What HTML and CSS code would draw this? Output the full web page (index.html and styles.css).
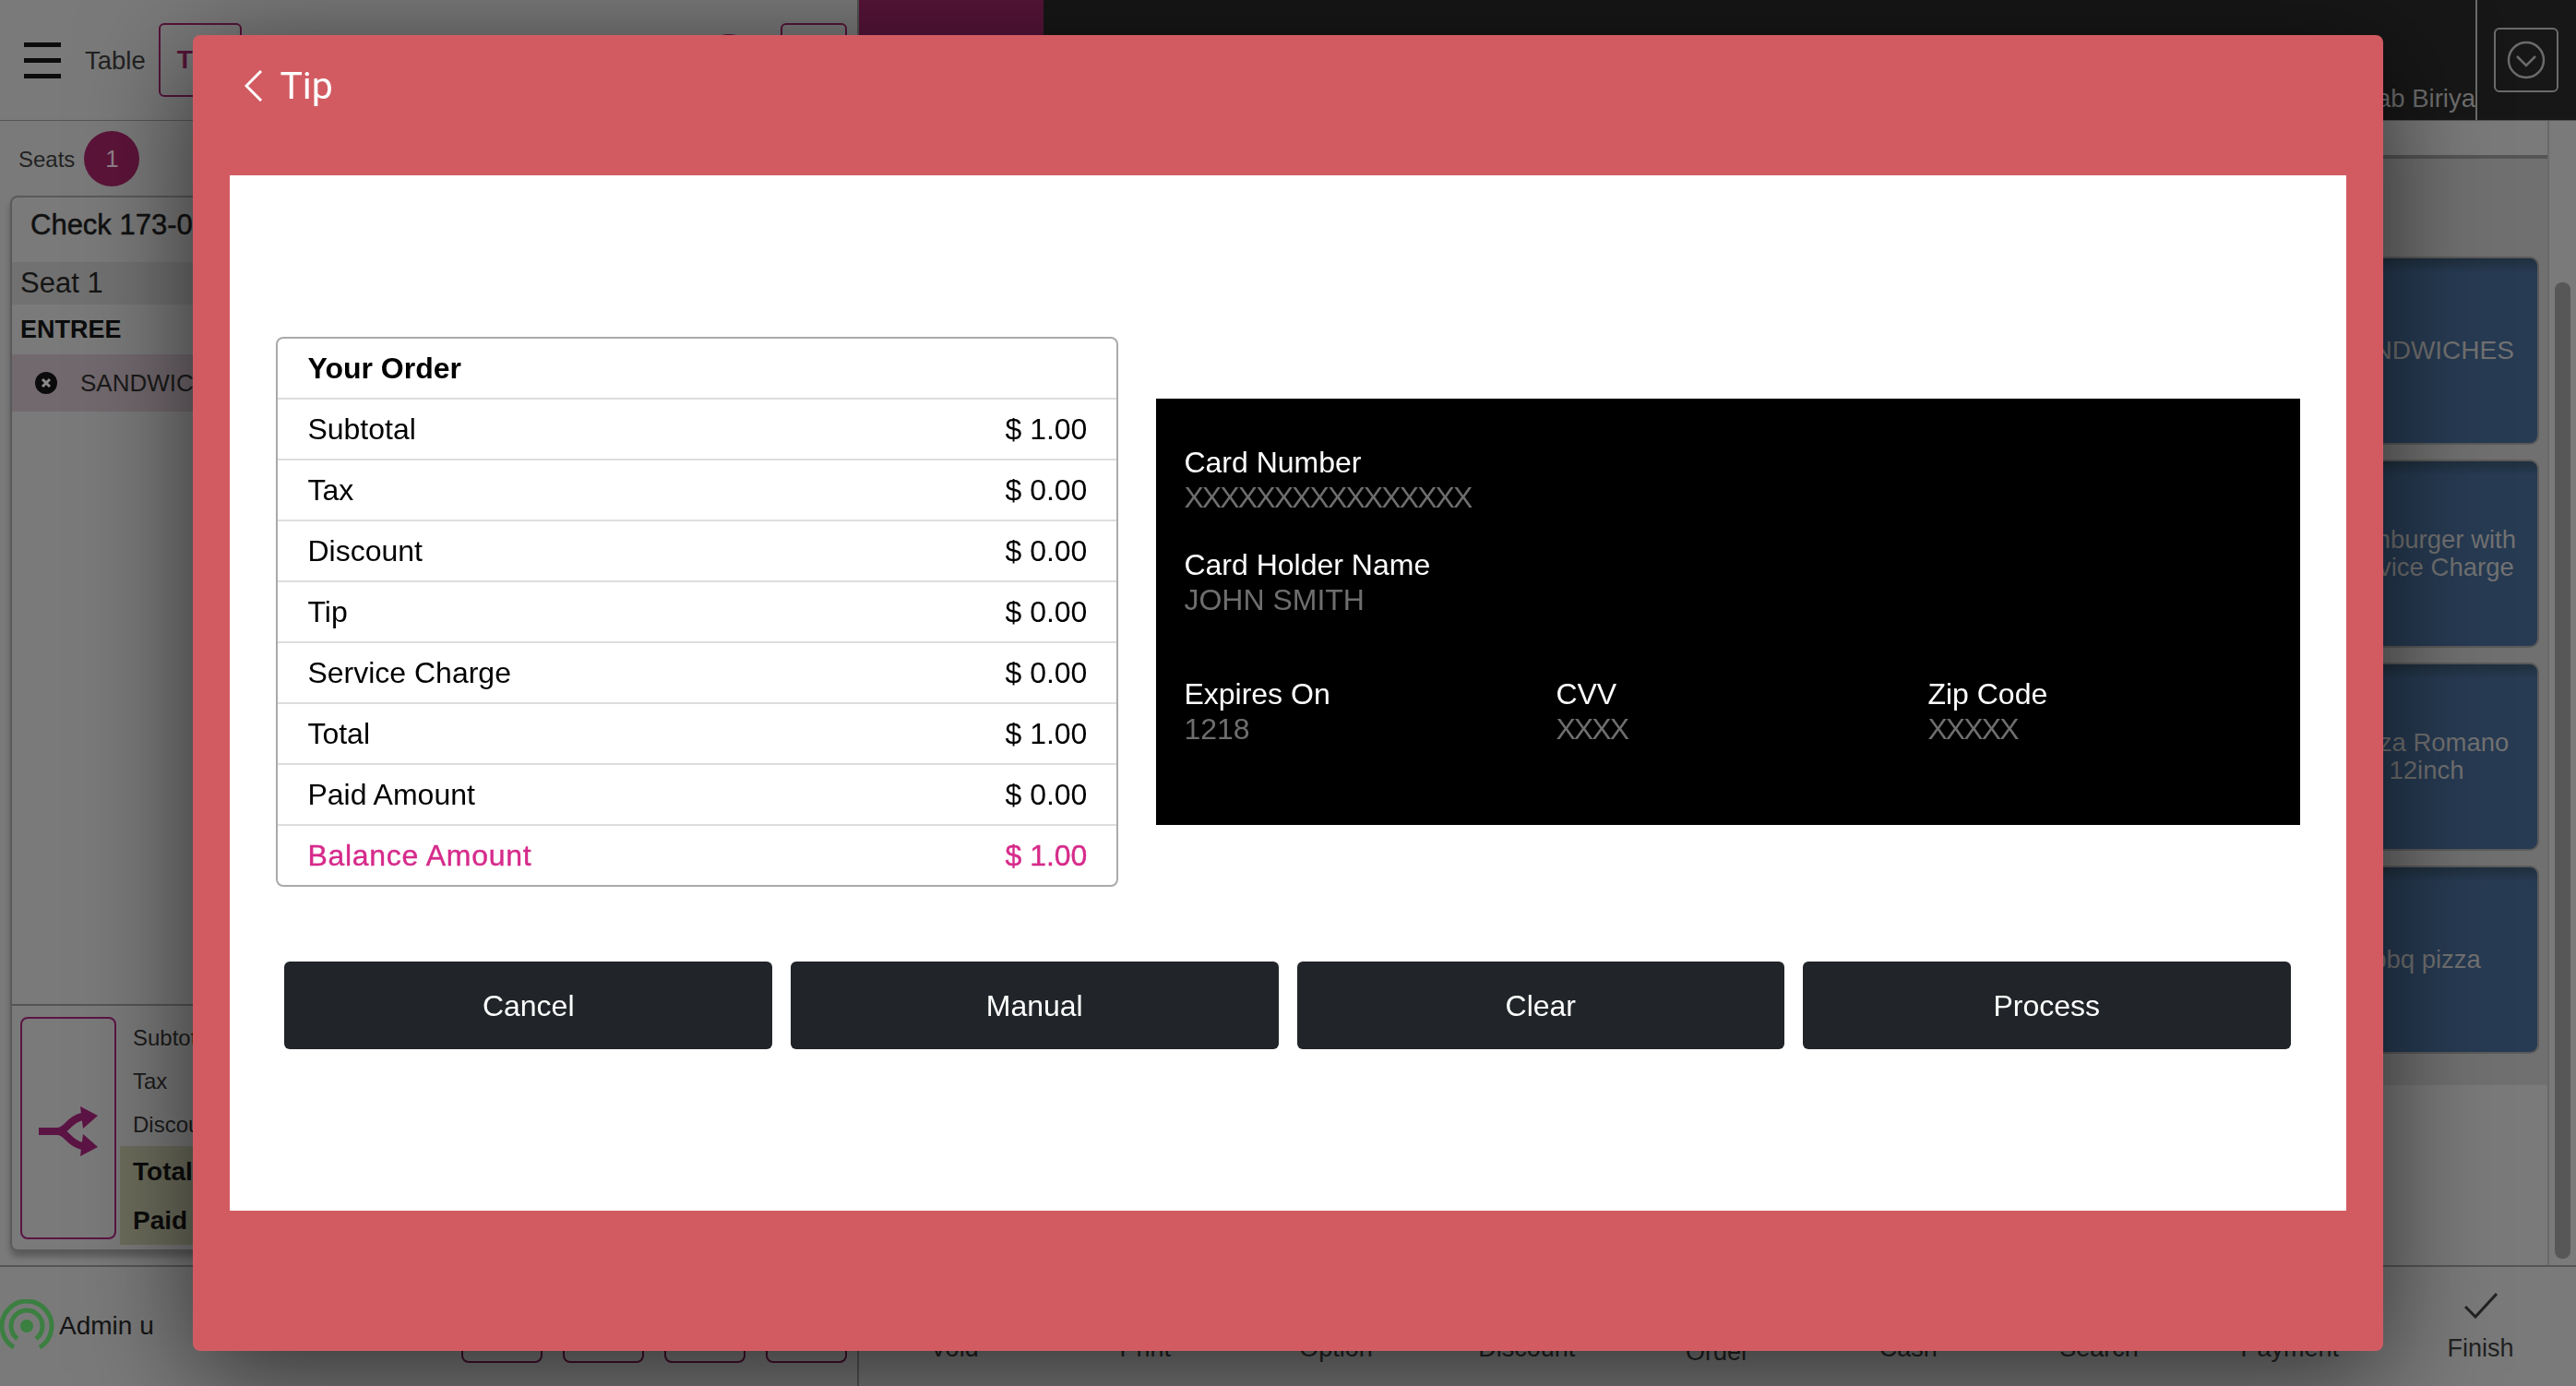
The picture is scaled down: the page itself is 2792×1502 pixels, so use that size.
FILE: index.html
```html
<!DOCTYPE html>
<html lang="en">
<head>
    <meta charset="UTF-8">
    <meta name="viewport" content="width=device-width, initial-scale=1.0">
    <title>Tip</title>
    <link rel="stylesheet" href="styles.css">
</head>
<body>
    <div class="app">
        <header class="top-bar">
            <div class="top-left">
                <div class="burger"><span></span><span></span><span></span></div>
                <span class="table-label">Table</span>
                <div class="table-box">T</div>
                <div class="top-spacer"></div>
                <div class="top-circle"></div>
                <div class="top-box"></div>
            </div>
            <div class="brand"></div>
            <div class="top-dark">
                <span class="store-name">Kabab Biriya</span>
            </div>
            <div class="top-action">
                <div class="action-box">
                    <svg width="42" height="42" viewBox="0 0 42 42" fill="none" stroke="#6b6b6b" stroke-width="2.5">
                        <circle cx="21" cy="21" r="19"/>
                        <polyline points="11,17 21,27 31,17"/>
                    </svg>
                </div>
            </div>
        </header>

        <main class="content">
            <section class="order-panel">
                <div class="seats-row">
                    <span class="seats-label">Seats</span>
                    <span class="seat-badge">1</span>
                </div>
                <div class="check-card">
                    <div class="check-title">Check 173-0</div>
                    <div class="seat-row">Seat 1</div>
                    <div class="course-row">ENTREE</div>
                    <div class="item-row">
                        <svg width="26" height="26" viewBox="0 0 26 26">
                            <circle cx="13" cy="13" r="12" fill="#0b0b0b"/>
                            <path d="M9 9l8 8M17 9l-8 8" stroke="#8a8a8a" stroke-width="3"/>
                        </svg>
                        <span>SANDWICH</span>
                    </div>
                    <div class="check-spacer"></div>
                    <div class="check-summary">
                        <div class="split-box">
                            <svg class="split-icon" width="64" height="54" viewBox="0 0 64 54" fill="none">
                                <path d="M0 27H20C31 27 31 15 47 11M20 27C31 27 31 39 47 43" stroke="#5c1445" stroke-width="8"/>
                                <polygon points="45,0 64,10 48,24" fill="#5c1445"/>
                                <polygon points="45,54 64,44 48,30" fill="#5c1445"/>
                            </svg>
                        </div>
                        <div class="summary-list">
                            <div class="summary-line">Subtotal</div>
                            <div class="summary-line">Tax</div>
                            <div class="summary-line">Discount</div>
                            <div class="summary-strong">
                                <div class="strong-line">Total</div>
                                <div class="strong-line">Paid</div>
                            </div>
                        </div>
                    </div>
                </div>
            </section>

            <section class="menu-panel">
                <div class="menu-tabs"></div>
                <div class="menu-items">
                    <div class="menu-item">SANDWICHES</div>
                    <div class="menu-item small">Hamburger with<br>Service Charge</div>
                    <div class="menu-item small">Pizza Romano<br>12inch</div>
                    <div class="menu-item small">bbq pizza</div>
                </div>
            </section>

            <div class="scroll-track"><div class="scroll-thumb"></div></div>
        </main>

        <footer class="foot">
            <div class="foot-left">
                <svg class="signal" width="60" height="58" viewBox="0 0 60 58" fill="none" stroke="#3b7f41" stroke-width="5">
                    <circle cx="29" cy="29" r="7" fill="#3b7f41" stroke="none"/>
                    <path d="M19 42.7A17 17 0 1 1 39 42.7"/>
                    <path d="M15 52.1A27 27 0 1 1 43 52.1"/>
                </svg>
                <span class="admin-name">Admin u</span>
                <div class="foot-boxes">
                    <div class="foot-box"></div>
                    <div class="foot-box"></div>
                    <div class="foot-box"></div>
                    <div class="foot-box"></div>
                </div>
            </div>
            <nav class="foot-tabs">
                <div class="foot-tab">Void</div>
                <div class="foot-tab">Print</div>
                <div class="foot-tab">Option</div>
                <div class="foot-tab">Discount</div>
                <div class="foot-tab order-tab">Order</div>
                <div class="foot-tab">Cash</div>
                <div class="foot-tab">Search</div>
                <div class="foot-tab">Payment</div>
                <div class="foot-tab">
                    <svg width="36" height="28" viewBox="0 0 36 28" fill="none" stroke="#222" stroke-width="3">
                        <polyline points="1,15 12,26 35,1"/>
                    </svg>
                    Finish
                </div>
            </nav>
        </footer>
    </div>

    <!-- Tip dialog -->
    <div class="overlay">
        <div class="modal">
            <div class="modal-head">
                <svg width="20" height="34" viewBox="0 0 20 34" fill="none" stroke="#fff" stroke-width="3">
                    <polyline points="18,1 2,17 18,33"/>
                </svg>
                <span class="modal-title">Tip</span>
            </div>
            <div class="modal-body">
                <div class="pay-row">
                    <div class="order-table">
                        <div class="order-row order-head">Your Order</div>
                        <div class="order-row"><span>Subtotal</span><span>$ 1.00</span></div>
                        <div class="order-row"><span>Tax</span><span>$ 0.00</span></div>
                        <div class="order-row"><span>Discount</span><span>$ 0.00</span></div>
                        <div class="order-row"><span>Tip</span><span>$ 0.00</span></div>
                        <div class="order-row"><span>Service Charge</span><span>$ 0.00</span></div>
                        <div class="order-row"><span>Total</span><span>$ 1.00</span></div>
                        <div class="order-row"><span>Paid Amount</span><span>$ 0.00</span></div>
                        <div class="order-row balance"><span class="balance-label">Balance Amount</span><span>$ 1.00</span></div>
                    </div>
                    <div class="card-box">
                        <div class="card-field">
                            <div class="card-label">Card Number</div>
                            <div class="card-value mask">XXXXXXXXXXXXXXXX</div>
                        </div>
                        <div class="card-field">
                            <div class="card-label">Card Holder Name</div>
                            <div class="card-value">JOHN SMITH</div>
                        </div>
                        <div class="card-columns">
                            <div>
                                <div class="card-label">Expires On</div>
                                <div class="card-value">1218</div>
                            </div>
                            <div>
                                <div class="card-label">CVV</div>
                                <div class="card-value mask">XXXX</div>
                            </div>
                            <div>
                                <div class="card-label">Zip Code</div>
                                <div class="card-value mask">XXXXX</div>
                            </div>
                        </div>
                    </div>
                </div>
                <div class="pay-buttons">
                    <button class="pay-btn">Cancel</button>
                    <button class="pay-btn">Manual</button>
                    <button class="pay-btn">Clear</button>
                    <button class="pay-btn">Process</button>
                </div>
            </div>
        </div>
    </div>
</body>
</html>
```

FILE: styles.css
```css
/* General Reset */
* {
    margin: 0;
    padding: 0;
    box-sizing: border-box;
}

body {
    font-family: 'Liberation Sans', Arial, sans-serif;
    background: #7a7a7a;
    color: #111;
    height: 100vh;
    overflow: hidden;
}

.app {
    height: 100vh;
    display: flex;
    flex-direction: column;
}

/* Top Bar */
.top-bar {
    height: 131px;
    flex: none;
    display: flex;
    border-bottom: 1px solid #555;
}

.top-left {
    width: 931px;
    display: flex;
    align-items: center;
    padding: 0 11px 0 26px;
    border-right: 2px solid #555;
}

.burger {
    width: 40px;
    display: flex;
    flex-direction: column;
    gap: 12px;
}

.burger span {
    height: 5px;
    background: #0c0c0c;
}

.table-label {
    margin-left: 26px;
    padding-top: 2px;
    font-size: 27.5px;
    color: #222;
}

.table-box {
    width: 90px;
    height: 80px;
    margin-left: 14px;
    padding-left: 18px;
    display: flex;
    align-items: center;
    border: 2px solid #571439;
    border-radius: 6px;
    font-size: 28px;
    font-weight: 700;
    color: #571439;
}

.top-spacer {
    flex: 1;
}

.top-circle {
    width: 60px;
    height: 60px;
    margin-top: 3px;
    border-radius: 50%;
    background: #571439;
}

.top-box {
    width: 72px;
    height: 80px;
    margin-left: 26px;
    border: 2px solid #571439;
    border-radius: 6px;
}

.brand {
    width: 200px;
    background: #571439;
}

.top-dark {
    flex: 1;
    display: flex;
    justify-content: flex-end;
    align-items: flex-end;
    padding-bottom: 7px;
    background: #171717;
}

.store-name {
    font-size: 27.5px;
    color: #6f6f6f;
}

.top-action {
    width: 109px;
    padding: 0 0 1px 18px;
    display: flex;
    align-items: center;
    background: #171717;
    border-left: 2px solid #6b6b6b;
}

.action-box {
    width: 70px;
    height: 70px;
    display: flex;
    align-items: center;
    justify-content: center;
    border: 2px solid #6b6b6b;
    border-radius: 6px;
}

/* Main Area */
.content {
    flex: 1;
    display: flex;
    min-height: 0;
}

.order-panel {
    width: 931px;
    display: flex;
    flex-direction: column;
    padding: 11px 11px 15px;
    border-right: 2px solid #555;
}

.seats-row {
    height: 60px;
    display: flex;
    align-items: center;
    gap: 10px;
    padding-left: 9px;
    margin-bottom: 10px;
}

.seats-label {
    padding-top: 2px;
    font-size: 24px;
    color: #222;
}

.seat-badge {
    width: 60px;
    height: 60px;
    display: flex;
    align-items: center;
    justify-content: center;
    border-radius: 50%;
    background: #5c1439;
    color: #8f8089;
    font-size: 26px;
}

.check-card {
    flex: 1;
    display: flex;
    flex-direction: column;
    border: 2px solid #5a5a5a;
    border-radius: 8px;
    box-shadow: 0 6px 6px rgba(0, 0, 0, 0.25);
}

.check-title {
    height: 70px;
    padding: 12px 0 0 20px;
    font-size: 31px;
    color: #111;
    -webkit-text-stroke: 0.5px #111;
}

.seat-row {
    height: 46px;
    padding-left: 9px;
    display: flex;
    align-items: center;
    background: #717171;
    font-size: 31px;
    color: #151515;
}

.course-row {
    height: 54px;
    padding-left: 9px;
    display: flex;
    align-items: center;
    font-size: 27px;
    font-weight: 700;
    color: #0c0c0c;
}

.item-row {
    height: 62px;
    padding-left: 24px;
    display: flex;
    align-items: center;
    gap: 24px;
    background: #72696e;
    font-size: 26px;
    color: #1a1a1a;
}

.check-spacer {
    flex: 1;
}

.check-summary {
    height: 266px;
    display: flex;
    padding: 12px 9px 11px 9px;
    border-top: 2px solid #555;
}

.split-box {
    width: 104px;
    display: flex;
    align-items: center;
    justify-content: center;
    border: 2px solid #5c1445;
    border-radius: 8px;
}

.split-icon {
    margin-top: 6px;
}

.summary-list {
    flex: 1;
    display: flex;
    flex-direction: column;
    margin-left: 4px;
}

.summary-line {
    height: 49px;
    padding-left: 14px;
    display: flex;
    align-items: center;
    font-size: 24px;
    color: #1c1c1c;
}

.summary-strong {
    flex: 1;
    margin-bottom: -6px;
    padding-top: 1px;
    background: #6c6d5c;
}

.strong-line {
    height: 53px;
    padding-left: 14px;
    display: flex;
    align-items: center;
    font-size: 28px;
    font-weight: 700;
    color: #0c0c0c;
}

/* Menu Panel */
.menu-panel {
    flex: 1;
    display: flex;
    flex-direction: column;
}

.menu-tabs {
    height: 41px;
    flex: none;
    border-bottom: 4px solid #555;
}

.menu-items {
    display: flex;
    flex-direction: column;
    align-items: flex-end;
    gap: 16px;
    padding: 106px 9px 34px 0;
    background: #707070;
}

.menu-item {
    width: 244px;
    height: 204px;
    display: flex;
    align-items: center;
    justify-content: center;
    text-align: center;
    border: 2px solid #5a5a5a;
    border-radius: 10px;
    background: linear-gradient(#1f2f3e, #273b53 16px);
    font-size: 28px;
    color: #727272;
}

.menu-item.small {
    font-size: 27.5px;
    line-height: 30px;
}

.scroll-track {
    width: 31px;
    flex: none;
    border-left: 2px solid #696969;
    padding: 175px 6px 7px 6px;
}

.scroll-thumb {
    height: 100%;
    background: #575757;
    border-radius: 8px;
}

/* Footer */
.foot {
    height: 131px;
    flex: none;
    display: flex;
    border-top: 2px solid #555;
}

.foot-left {
    width: 931px;
    display: flex;
    align-items: center;
    padding-right: 11px;
    padding-bottom: 2px;
    border-right: 2px solid #555;
}

.signal {
    flex: none;
}

.admin-name {
    margin-left: 4px;
    font-size: 28px;
    color: #151515;
}

.foot-boxes {
    margin-left: auto;
    display: flex;
    gap: 22px;
    align-self: flex-end;
    padding-bottom: 23px;
}

.foot-box {
    width: 88px;
    height: 80px;
    border: 2px solid #45102f;
    border-radius: 8px;
}

.foot-tabs {
    flex: 1;
    display: grid;
    grid-template-columns: repeat(9, 1fr);
}

.foot-tab {
    display: flex;
    flex-direction: column;
    justify-content: flex-end;
    align-items: center;
    gap: 17px;
    padding-bottom: 26px;
    font-size: 27px;
    line-height: 30px;
    color: #222;
}

.order-tab {
    padding-bottom: 22px;
}

/* Modal */
.overlay {
    position: fixed;
    inset: 0;
    display: flex;
    align-items: center;
    justify-content: center;
}

.modal {
    width: 85%;
    height: 95%;
    padding: 0 40px;
    background: #d25b62;
    border-radius: 8px;
    box-shadow: 0 24px 120px rgba(0, 0, 0, 0.6);
}

.modal-head {
    height: 152px;
    display: flex;
    align-items: flex-start;
    gap: 18px;
    padding: 38px 0 0 16px;
    color: #fff;
}

.modal-title {
    font-family: 'Roboto', sans-serif;
    font-weight: 400;
    font-size: 41px;
    line-height: 34px;
}

.modal-body {
    height: 1122px;
    padding: 175px 50px 0;
    background: #fff;
}

/* Your Order Table */
.pay-row {
    display: grid;
    grid-template-columns: 913px 1240px;
    gap: 41px;
    align-items: center;
}

.order-table {
    border: 2px solid #aaa;
    border-radius: 8px;
    overflow: hidden;
}

.order-row {
    height: 66px;
    display: flex;
    justify-content: space-between;
    align-items: center;
    padding: 1px 32px 0;
    border-top: 2px solid #ddd;
    font-size: 32px;
    color: #000;
}

.order-head {
    height: 64px;
    border-top: none;
    font-weight: 700;
}

.balance {
    color: #d62b8b;
    -webkit-text-stroke: 0.4px #d62b8b;
}

.balance-label {
    letter-spacing: 0.7px;
}

/* Card Preview */
.card-box {
    height: 462px;
    padding: 51px 30px 0;
    background: #000;
    line-height: 36px;
    font-size: 32px;
}

.card-field {
    margin-bottom: 37px;
}

.card-label {
    color: #fff;
}

.card-value {
    margin-top: 2px;
    color: #6e6e6e;
}

.card-value.mask {
    letter-spacing: -1.9px;
}

.card-columns {
    display: grid;
    grid-template-columns: repeat(3, 403px);
    margin-top: 66px;
}

/* Action Buttons */
.pay-buttons {
    display: grid;
    grid-template-columns: repeat(4, 1fr);
    gap: 20px;
    margin: 81px 10px 0 9px;
}

.pay-btn {
    height: 95px;
    padding-top: 2px;
    background: #212529;
    color: #fff;
    border: none;
    border-radius: 6px;
    font-family: inherit;
    font-size: 32px;
}
```
